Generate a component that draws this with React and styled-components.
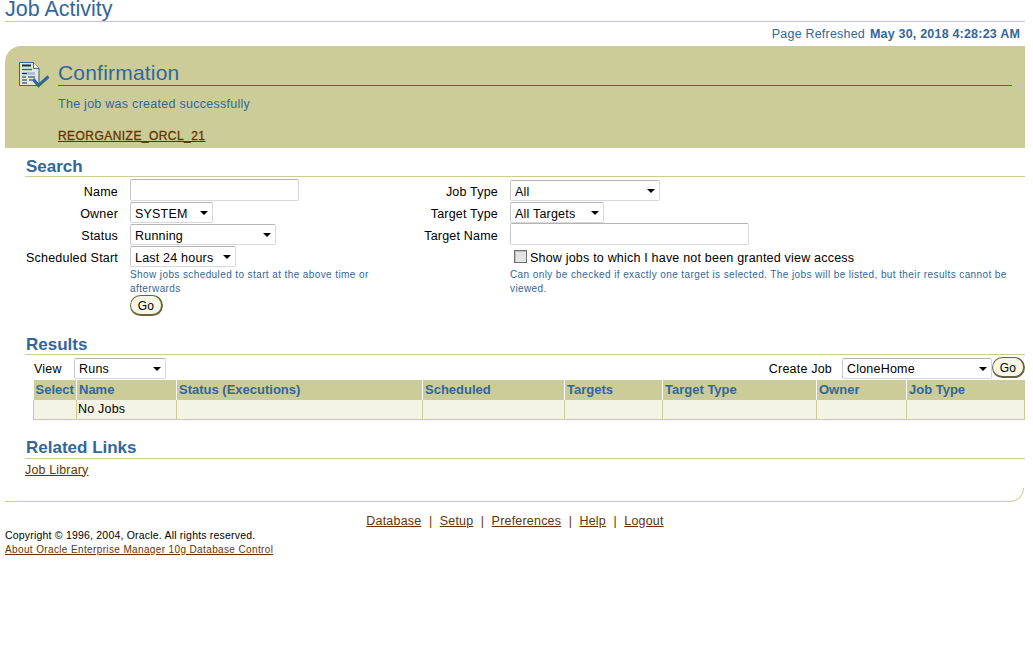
import React from "react";
import styled, { createGlobalStyle } from "styled-components";

const Global = createGlobalStyle`
  html, body { margin: 0; padding: 0; background: #fff; }
  body { font-family: "Liberation Sans", Arial, sans-serif; font-size: 12.5px; color: #000; }
`;
const Page = styled.div`width: 1025px; padding-left: 5px; box-sizing: border-box;`;
const PageTitle = styled.h1`
  margin: 0; height: 21px; border-bottom: 1px solid #cccc99;
  font-size: 21.5px; line-height: 18px; font-weight: 400; color: #336699;
`;
const Refreshed = styled.div`
  height: 24px; display: flex; justify-content: flex-end; align-items: center; gap: 5px;
  padding-right: 5px; color: #336699; font-size: 12.5px; letter-spacing: .2px;
  b { font-weight: 700; }
`;
const Banner = styled.section`
  height: 102px; background: #cccc99; border-top-left-radius: 16px;
  display: flex; padding: 16px 13px 0 14px; box-sizing: border-box; gap: 8px;
`;
const BannerBody = styled.div`flex: 1; display: flex; flex-direction: column; margin-top: -1px;`;
const BannerTitle = styled.h2`
  margin: 0; height: 24px; border-bottom: 1px solid #336699;
  font-size: 21px; line-height: 24px; font-weight: 400; color: #336699; letter-spacing: .2px;
`;
const BannerText = styled.div`margin-top: 11px; color: #336699; font-size: 12.5px; line-height: 14px; letter-spacing: .27px;`;
const BannerLink = styled.a`
  margin-top: 18px; font-size: 12px; line-height: 14px; letter-spacing: .45px; font-weight: 400;
  color: #663300; text-decoration: underline; align-self: flex-start; -webkit-text-stroke: .3px #663300;
`;
const Section = styled.section`margin-left: 20px; margin-top: ${p => p.$top}px;`;
const Head = styled.h2`
  margin: 0; height: 21px; box-sizing: border-box; border-bottom: 1px solid #cccc99; padding: ${p => p.$pt ?? 1}px 0 0 1px;
  font-size: 17px; line-height: 20px; font-weight: 700; color: #336699;
`;
const FormColumns = styled.div`display: grid; grid-template-columns: 385px 515px; padding-top: 2px;`;
const Col = styled.div`display: flex; flex-direction: column;`;
const Row = styled.div`display: flex; align-items: center; height: 22px; gap: 12px;`;
const Label = styled.label`
  width: ${p => p.$w}px; text-align: right; padding-top: 4px; box-sizing: border-box; flex: none; white-space: nowrap;
  font-size: 12.5px; letter-spacing: .2px;
`;
const Field = styled.input`
  width: ${p => p.$w}px; height: 22px; box-sizing: border-box; margin: 0; padding: 0 4px;
  border: 1px solid #d8d8dc; border-top-color: #b4b4b8; border-left-color: #c8c8cc; border-radius: 2px; background: #fff;
`;
const SelectBox = styled.div`
  width: ${p => p.$w}px; height: 21px; box-sizing: border-box; position: relative; flex: none; margin-top: 1px;
  border: 1px solid #d8d8dc; border-top-color: #b4b4b8; border-left-color: #c8c8cc; border-radius: 2px;
  padding: ${p => p.$pt || 0}px 0 0 4px; font-size: 12.5px; line-height: 20px; letter-spacing: .2px; background: #fff;
  &::after {
    content: ""; position: absolute; right: 4px; top: 8px;
    border-left: 4px solid transparent; border-right: 4px solid transparent; border-top: 4px solid #000;
  }
`;
const Hint = styled.div`
  margin: ${p => p.$t}px 0 0 ${p => p.$l}px; width: ${p => p.$w}px; font-size: 10px; line-height: 14px; color: #336699; letter-spacing: .4px;
`;
const GoButton = styled.button`
  width: 33px; height: 21px; padding: 1px 0 0; margin: 0; box-sizing: border-box; flex: none;
  border: 1px solid #66663a; border-right-width: 2px; border-bottom-width: 2px; border-radius: 11px;
  background: #f7f7e7; font: 12px "Liberation Sans", Arial, sans-serif; color: #000; letter-spacing: .3px;
`;
const GoRow = styled.div`margin: -1px 0 0 105px;`;
const CheckRow = styled.div`display: flex; align-items: center; height: 22px; margin-left: 100px; margin-top: 2px; gap: 3px; font-size: 12.5px; letter-spacing: .2px;`;
const CheckBoxMark = styled.input`
  appearance: none; width: 13px; height: 13px; margin: 0 0 3px 4px; box-sizing: border-box;
  border: 1px solid #707070; background: #e4e4e4; box-shadow: inset 1px 1px 0 #c0c0c0;
`;
const ResultsBar = styled.div`display: flex; align-items: center; height: 25px; padding-left: 9px;`;
const ViewLabel = styled.span`width: 40px; padding-top: 2px; font-size: 12.5px; letter-spacing: .2px;`;
const Spacer = styled.div`flex: 1;`;
const CreateLabel = styled.span`margin-right: 10px; padding-top: 2px; font-size: 12.5px; letter-spacing: .2px;`;
const Table = styled.table`
  margin-left: 8px; width: 991px; table-layout: fixed; border-collapse: collapse; font-size: 12.5px;
`;
const Th = styled.th`
  width: ${p => p.$w}px; height: 20px; box-sizing: border-box; background: #cccc99; color: #336699; font-weight: 700;
  text-align: left; padding: 0 0 2px 2px; font-size: 13px; border-left: 1px solid #fff;
  white-space: nowrap; overflow: hidden;
  &:first-child { border-left: 0; }
`;
const Td = styled.td`
  height: 19px; box-sizing: border-box; background: #f4f4e6; border: 1px solid #cccc99; padding: 0 0 0 1px; letter-spacing: .2px;
  border-top: 0;
`;
const Link = styled.a`color: #663300; text-decoration: underline; font-size: ${p => p.$s || 12.5}px; letter-spacing: ${p => p.$sp || .15}px;`;
const LinkRow = styled.div`padding-top: 4px; height: 18px; line-height: 14px;`;
const Curve = styled.div`
  height: 13px; margin: 7px 1px 0 0; border-bottom: 1px solid #cccc99; border-right: 1px solid #cccc99;
  border-bottom-right-radius: 14px;
`;
const FooterNav = styled.nav`
  margin-top: 12px; display: flex; justify-content: center; gap: 7.5px; height: 14px; line-height: 14px;
  font-size: 12.5px; color: #663300;
`;
const Copy = styled.div`margin-top: 0; font-size: 10.5px; line-height: 14px; letter-spacing: .2px;`;
const FootLink = styled.div`margin-top: 1px; font-size: 10px; line-height: 14px;`;

const Icon = () => (
  <svg width="31" height="28" viewBox="0 0 31 28" style={{ flex: "none" }}>
    <path d="M.5.5h14l5.500 6v17H.5z" fill="#e6e6d2" stroke="#336699" />
    <path d="M14.500.5v6H20" fill="#f6f6ea" stroke="#336699" />
    <path d="M3 3.500h9" stroke="#003366" strokeWidth="2" />
    <path d="M3 7.500h10" stroke="#336699" strokeWidth="1.400" />
    <path d="M3 10h13v3H3z" fill="#a9c3dd" />
    <path d="M3 11.500h5M3 15h4M9 15h7M3 18h5M10 18h3M3 21h5" stroke="#003366" />
    <path d="M14 17l5.500 6.500L29.500 14.500" fill="none" stroke="#336699" strokeWidth="3.200" />
  </svg>
);

const cols = [["Select", 43], ["Name", 100], ["Status (Executions)", 246], ["Scheduled", 142], ["Targets", 98], ["Target Type", 154], ["Owner", 90], ["Job Type", 118]];

export default function App() {
  return (
    <Page>
      <Global />
      <PageTitle>Job Activity</PageTitle>
      <Refreshed>Page Refreshed <b>May 30, 2018 4:28:23 AM</b></Refreshed>
      <Banner>
        <Icon />
        <BannerBody>
          <BannerTitle>Confirmation</BannerTitle>
          <BannerText>The job was created successfully</BannerText>
          <BannerLink href="#">REORGANIZE_ORCL_21</BannerLink>
        </BannerBody>
      </Banner>
      <Section $top={8}>
        <Head>Search</Head>
        <FormColumns>
          <Col>
            <Row><Label $w={93}>Name</Label><Field $w={169} /></Row>
            <Row><Label $w={93}>Owner</Label><SelectBox $w={83} $pt={1}>SYSTEM</SelectBox></Row>
            <Row><Label $w={93}>Status</Label><SelectBox $w={146} $pt={1}>Running</SelectBox></Row>
            <Row><Label $w={93}>Scheduled Start</Label><SelectBox $w={106} $pt={1}>Last 24 hours</SelectBox></Row>
            <Hint $t={1} $l={105} $w={260}>Show jobs scheduled to start at the above time or afterwards</Hint>
            <GoRow><GoButton>Go</GoButton></GoRow>
          </Col>
          <Col>
            <Row><Label $w={88}>Job Type</Label><SelectBox $w={150} $pt={1}>All</SelectBox></Row>
            <Row><Label $w={88}>Target Type</Label><SelectBox $w={94} $pt={1}>All Targets</SelectBox></Row>
            <Row><Label $w={88}>Target Name</Label><Field $w={239} /></Row>
            <CheckRow><CheckBoxMark type="checkbox" />Show jobs to which I have not been granted view access</CheckRow>
            <Hint $t={-1} $l={100} $w={505}>Can only be checked if exactly one target is selected. The jobs will be listed, but their results cannot be viewed.</Hint>
          </Col>
        </FormColumns>
      </Section>
      <Section $top={18}>
        <Head>Results</Head>
        <ResultsBar>
          <ViewLabel>View</ViewLabel>
          <SelectBox $w={92}>Runs</SelectBox>
          <Spacer />
          <CreateLabel>Create Job</CreateLabel>
          <SelectBox $w={150}>CloneHome</SelectBox>
          <GoButton>Go</GoButton>
        </ResultsBar>
        <Table>
          <thead><tr>{cols.map(([n, w]) => <Th key={n} $w={w}>{n}</Th>)}</tr></thead>
          <tbody><tr><Td /><Td>No Jobs</Td><Td /><Td /><Td /><Td /><Td /><Td /></tr></tbody>
        </Table>
      </Section>
      <Section $top={18}>
        <Head $pt={0}>Related Links</Head>
        <LinkRow><Link href="#">Job Library</Link></LinkRow>
      </Section>
      <Curve />
      <FooterNav>
        <Link href="#" $sp={.2}>Database</Link><span>|</span><Link href="#" $sp={.2}>Setup</Link><span>|</span><Link href="#" $sp={.2}>Preferences</Link><span>|</span><Link href="#" $sp={.2}>Help</Link><span>|</span><Link href="#" $sp={.2}>Logout</Link>
      </FooterNav>
      <Copy>Copyright © 1996, 2004, Oracle. All rights reserved.</Copy>
      <FootLink><Link href="#" $s={10} $sp={.37}>About Oracle Enterprise Manager 10g Database Control</Link></FootLink>
    </Page>
  );
}
